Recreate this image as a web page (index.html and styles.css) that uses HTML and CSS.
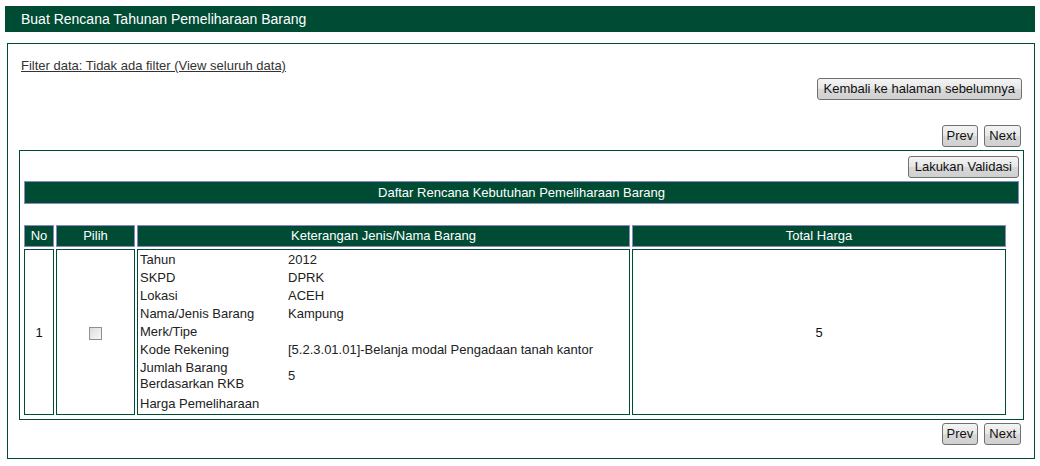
FILE: index.html
```html
<!DOCTYPE html>
<html>
<head>
<meta charset="utf-8">
<title>Buat Rencana Tahunan Pemeliharaan Barang</title>
<link rel="stylesheet" href="styles.css">
</head>
<body>
<div class="page">
  <div class="title-bar">Buat Rencana Tahunan Pemeliharaan Barang</div>
  <div class="box">
    <div class="filter"><a href="#">Filter data: Tidak ada filter (View seluruh data)</a></div>
    <div class="actions back-row"><button class="btn wide">Kembali ke halaman sebelumnya</button></div>
    <div class="actions pager-top"><button class="btn">Prev</button><button class="btn">Next</button></div>
    <div class="inner">
      <div class="actions validate-row"><button class="btn wide">Lakukan Validasi</button></div>
      <div class="list-title">Daftar Rencana Kebutuhan Pemeliharaan Barang</div>
      <table class="data">
        <thead>
          <tr>
            <th class="c-no">No</th>
            <th class="c-pilih">Pilih</th>
            <th class="c-ket">Keterangan Jenis/Nama Barang</th>
            <th class="c-total">Total Harga</th>
          </tr>
        </thead>
        <tbody>
          <tr>
            <td class="center">1</td>
            <td class="center"><input type="checkbox" class="chk"></td>
            <td class="ket">
              <table class="detail">
                <tr><td class="lbl">Tahun</td><td>2012</td></tr>
                <tr><td class="lbl">SKPD</td><td>DPRK</td></tr>
                <tr><td class="lbl">Lokasi</td><td>ACEH</td></tr>
                <tr><td class="lbl">Nama/Jenis Barang</td><td>Kampung</td></tr>
                <tr><td class="lbl">Merk/Tipe</td><td></td></tr>
                <tr><td class="lbl">Kode Rekening</td><td>[5.2.3.01.01]-Belanja modal Pengadaan tanah kantor</td></tr>
                <tr><td class="lbl">Jumlah Barang Berdasarkan RKB</td><td>5</td></tr>
                <tr><td class="lbl last">Harga Pemeliharaan</td><td class="last"></td></tr>
              </table>
            </td>
            <td class="center">5</td>
          </tr>
        </tbody>
      </table>
    </div>
    <div class="actions pager-bottom"><button class="btn">Prev</button><button class="btn">Next</button></div>
  </div>
</div>
</body>
</html>
```
FILE: styles.css
```css
* { box-sizing: border-box; }
body {
  margin: 0;
  font-family: "Liberation Sans", Arial, sans-serif;
  font-size: 13px;
  color: #222;
  background: #fff;
}
.page { padding: 6px 5px; }
.title-bar {
  height: 26px;
  line-height: 26px;
  background: #004b33;
  color: #fff;
  font-size: 14px;
  padding-left: 16px;
}
.box {
  margin: 11px 0 0 2px;
  border: 1px solid #004b33;
  padding: 0 10px 13px 11px;
}
.filter {
  padding: 14px 0 0 2px;
  line-height: 16px;
}
.filter a { color: #333; text-decoration: underline; }
.actions { display: flex; justify-content: flex-end; gap: 6px; }
.back-row { margin-top: 4px; padding-right: 2px; }
.pager-top { margin-top: 25px; padding-right: 3px; }
.pager-bottom { margin-top: 3px; padding-right: 3px; }
.btn {
  height: 22px;
  padding: 0 4px;
  font-family: "Liberation Sans", Arial, sans-serif;
  font-size: 13px;
  color: #111;
  border: 1px solid #707070;
  border-radius: 3px;
  background: linear-gradient(#f4f4f4, #e6e6e6 50%, #d8d8d8 51%, #d0d0d0);
  line-height: 20px;
}
.btn.wide { padding: 0 6px; }
.inner {
  margin-top: 3px;
  border: 1px solid #004b33;
  padding: 5px 4px 2px 4px;
}
.list-title {
  margin-top: 3px;
  height: 23px;
  line-height: 21px;
  background: #004b33;
  color: #fff;
  text-align: center;
  border: 1px solid #8a8ac0;
}
.data {
  margin: 19px 0 0 -2px;
  width: 986px;
  border-collapse: separate;
  border-spacing: 2px;
  table-layout: fixed;
}
.data th {
  background: #004b33;
  color: #fff;
  font-weight: normal;
  border: 1px solid #8a8ac0;
  height: 22px;
  padding: 0;
  line-height: 20px;
}
.c-no { width: 30px; }
.c-pilih { width: 79px; }
.c-ket { width: 493px; }
.c-total { width: 374px; }
.data > tbody > tr > td {
  border: 1px solid #004b33;
  padding: 0;
  color: #111;
}
.center { text-align: center; vertical-align: middle; }
.ket { vertical-align: top; padding: 1px 0 0 2px !important; }
.detail { border-collapse: collapse; }
.detail td {
  padding: 1px 0;
  line-height: 16px;
  vertical-align: middle;
  color: #222;
}
.detail .lbl { width: 148px; padding-right: 4px; }
.detail .last { padding-top: 3px; padding-bottom: 2px; }
.chk {
  appearance: none;
  -webkit-appearance: none;
  width: 13px;
  height: 13px;
  margin: 0;
  border: 1px solid #8e8f8f;
  background: linear-gradient(135deg, #dcdcdc, #f8f8f8);
  vertical-align: middle;
}
```
